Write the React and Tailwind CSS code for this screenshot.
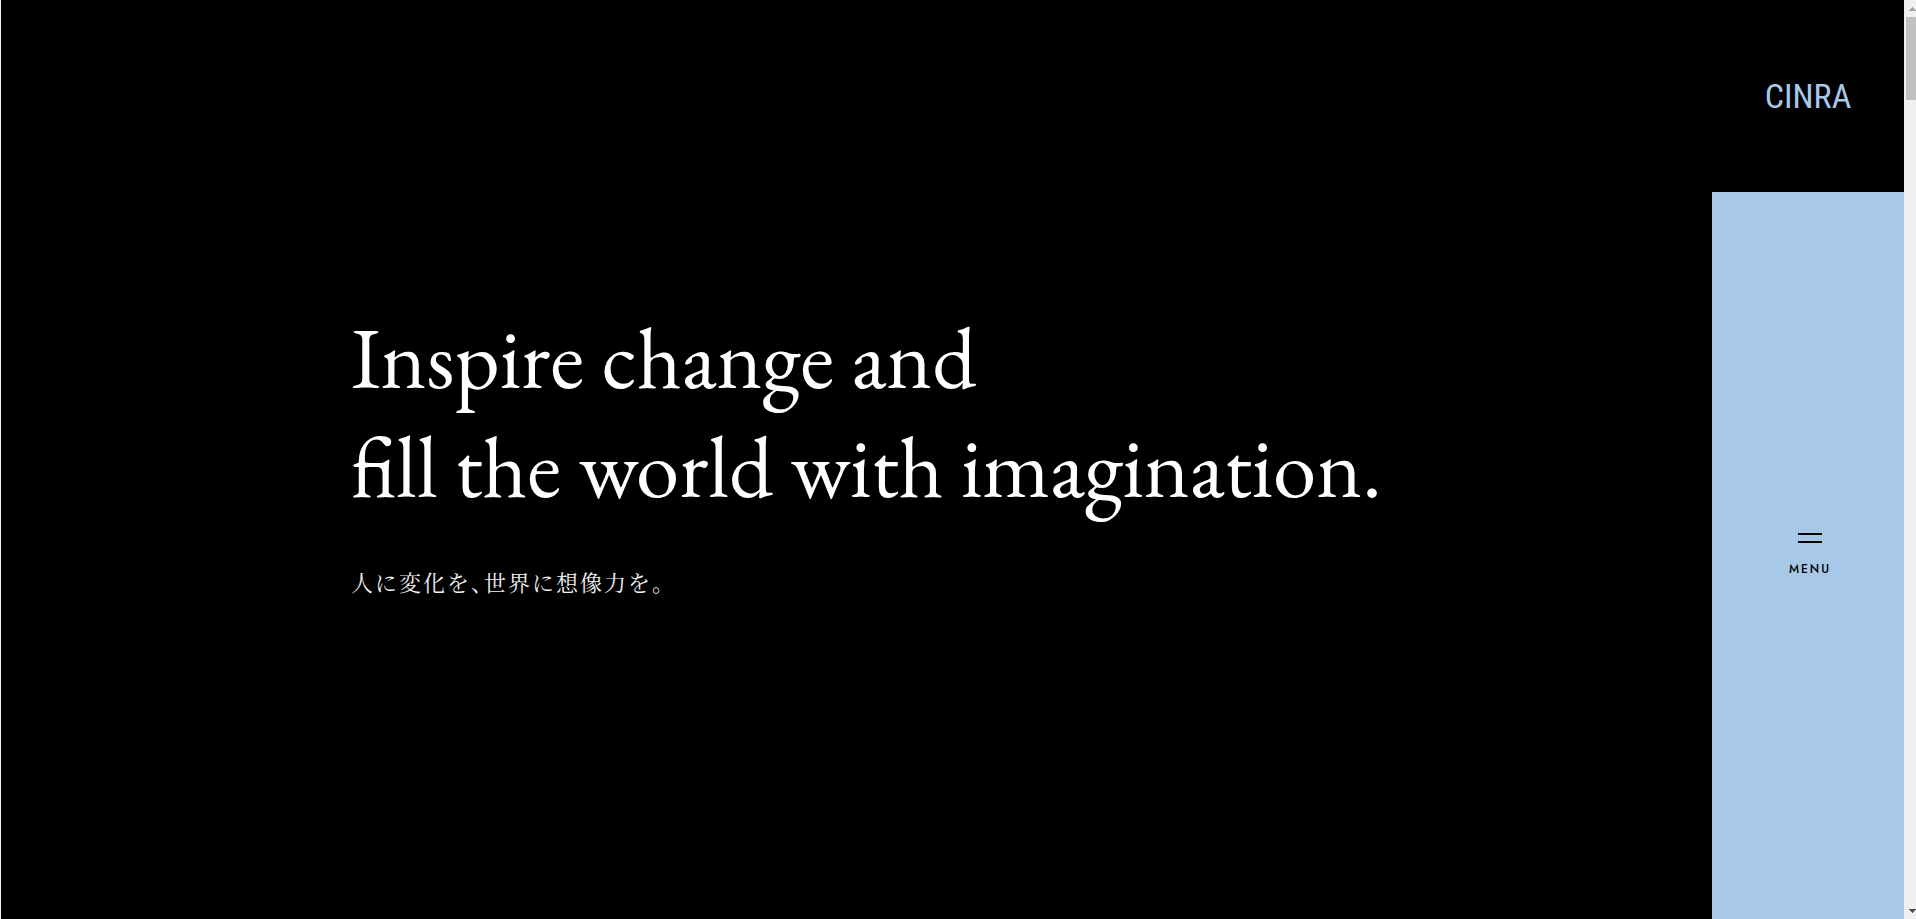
function Logo() {
  return (
    <a
      href="/"
      className="font-['Roboto_Condensed',Roboto,sans-serif] text-[34px] leading-none text-[#a8c8e8]"
    >
      CINRA
    </a>
  );
}

function MenuButton() {
  return (
    <button
      type="button"
      className="flex w-full flex-1 flex-col items-center bg-[#a8c8e8] pt-[341px] text-black"
    >
      <span className="flex flex-col gap-[6px] pl-1" aria-hidden="true">
        <span className="h-[2px] w-6 bg-black" />
        <span className="h-[2px] w-6 bg-black" />
      </span>
      <span className="mt-[18px] pl-1 font-[Jost,Outfit,'Open_Sans',sans-serif] text-xs font-medium tracking-[2px]">MENU</span>
    </button>
  );
}

function ScrollRail() {
  return (
    <div className="flex w-3 shrink-0 flex-col items-end bg-[#f0f0f0]" aria-hidden="true">
      <svg className="h-[17px] w-[7px]" viewBox="0 0 7 17" shapeRendering="crispEdges">
        <path d="M3 7h1v1h1v1h1v1h1v1H0v-1h1V9h1V8h1z" fill="#a3a3a3" />
      </svg>
      <div className="h-[83px] w-[10px] bg-[#c1c1c1]" />
      <svg className="mt-auto h-[17px] w-[7px]" viewBox="0 0 7 17" shapeRendering="crispEdges">
        <path d="M0 7h7v1H6v1H5v1H4v1H3v-1H2V9H1V8H0z" fill="#505050" />
      </svg>
    </div>
  );
}

export default function App() {
  return (
    <div className="flex min-h-screen border-l border-[#f0f0f0] bg-black text-white">
      <main className="flex flex-1 flex-col justify-center pb-[18px] pl-[350px]">
        <h1 className="font-['EB_Garamond','Liberation_Serif',serif] text-[87px] leading-[109px]">
          Inspire change and
          <br />
          fill the world with imagination.
        </h1>
        <p
          lang="ja"
          className="mt-[45px] font-['Noto_Serif_CJK_JP','Noto_Sans_CJK_JP',sans-serif] text-[22px] leading-8 tracking-[2px] text-[#f0f0f0] [font-feature-settings:'halt']"
        >
          人に変化を、世界に想像力を。
        </p>
      </main>
      <aside className="flex w-48 shrink-0 flex-col">
        <div className="flex h-48 items-center justify-center">
          <Logo />
        </div>
        <MenuButton />
      </aside>
      <ScrollRail />
    </div>
  );
}
